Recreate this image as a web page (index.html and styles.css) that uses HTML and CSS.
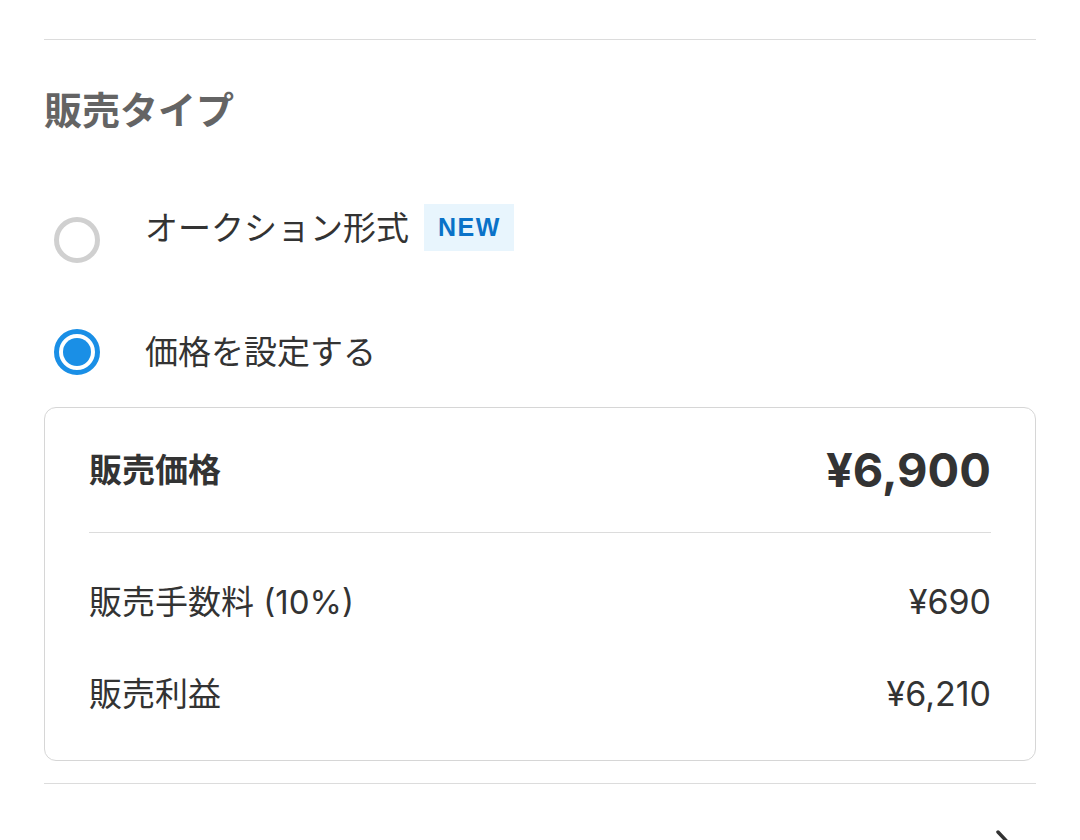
FILE: index.html
```html
<!DOCTYPE html>
<html lang="ja">
<head>
<meta charset="utf-8">
<title>販売タイプ</title>
<link rel="stylesheet" href="styles.css">
</head>
<body>
<div class="page">
  <div class="rule rule--top"></div>
  <h2 class="section-title">販売タイプ</h2>

  <div class="option option--auction">
    <span class="radio radio--offset"></span>
    <span class="option-body">
      <span class="option-label">オークション形式</span>
      <span class="badge">NEW</span>
    </span>
  </div>

  <div class="option option--fixed">
    <span class="radio radio--checked"><span class="radio-dot"></span></span>
    <span class="option-body">
      <span class="option-label">価格を設定する</span>
    </span>
  </div>

  <div class="price-card">
    <div class="price-head">
      <span class="price-head-label">販売価格</span>
      <span class="price-head-value">¥6,900</span>
    </div>
    <div class="price-divider"></div>
    <div class="price-rows">
      <div class="price-row">
        <span class="price-row-label">販売手数料 (10%)</span>
        <span class="price-row-value">¥690</span>
      </div>
      <div class="price-row">
        <span class="price-row-label">販売利益</span>
        <span class="price-row-value">¥6,210</span>
      </div>
    </div>
  </div>

  <div class="rule rule--bottom"></div>

  <div class="next-row">
    <svg class="chevron" width="22" height="36" viewBox="0 0 22 36" aria-hidden="true">
      <path d="M3 2 L18 18 L3 34" fill="none" stroke="#333333" stroke-width="3.5" stroke-linecap="round" stroke-linejoin="round"/>
    </svg>
  </div>
</div>
</body>
</html>
```

FILE: styles.css
```css
html, body {
  margin: 0;
  padding: 0;
  background: #ffffff;
}

body {
  font-family: "Inter", "Noto Sans CJK JP", sans-serif;
  color: #333333;
  width: 1080px;
  height: 840px;
  overflow: hidden;
}

.page {
  padding: 0 44px;
}

.rule {
  height: 1px;
  background: #dcdcdc;
}

.rule--top {
  margin-top: 39px;
}

.section-title {
  margin: 51px 0 0 0;
  font-size: 38px;
  line-height: 38px;
  font-weight: 700;
  color: #646464;
}

.option {
  display: flex;
  align-items: flex-start;
  gap: 45px;
  padding-left: 10px;
}

.option--auction {
  margin-top: 75px;
}

.option--fixed {
  margin-top: 66px;
  align-items: center;
}

.radio {
  flex: none;
  width: 46px;
  height: 46px;
  box-sizing: border-box;
  border-radius: 50%;
  border: 5px solid #d0d0d0;
  display: flex;
  align-items: center;
  justify-content: center;
}

.radio--offset {
  margin-top: 13px;
}

.radio--checked {
  border-color: #1a8fe6;
}

.radio-dot {
  width: 28px;
  height: 28px;
  border-radius: 50%;
  background: #1a8fe6;
}

.option-body {
  display: flex;
  align-items: center;
  gap: 15px;
  min-height: 46px;
}

.option-label {
  font-size: 33px;
  line-height: 46px;
  color: #333333;
}

.badge {
  display: inline-flex;
  align-items: center;
  height: 47px;
  padding: 0 13px 0 14px;
  background: #e8f5fd;
  color: #0a72c8;
  font-family: "Liberation Sans", "Noto Sans", sans-serif;
  font-size: 25px;
  font-weight: 700;
  letter-spacing: 1.5px;
}

.price-card {
  margin-top: 32px;
  border: 1.5px solid #d6d6d6;
  border-radius: 12px;
  padding: 0 44px;
}

.price-head {
  display: flex;
  justify-content: space-between;
  align-items: center;
  padding: 38px 0;
  height: 48px;
}

.price-head-label {
  font-size: 33px;
  font-weight: 700;
  line-height: 48px;
  color: #333333;
}

.price-head-value {
  font-size: 47px;
  font-weight: 700;
  line-height: 48px;
  color: #333333;
}

.price-divider {
  height: 1px;
  background: #dcdcdc;
}

.price-rows {
  display: flex;
  flex-direction: column;
  gap: 48px;
  padding: 47px 0 44px 0;
}

.price-row {
  display: flex;
  justify-content: space-between;
  align-items: center;
  height: 44px;
}

.price-row-label {
  font-size: 33px;
  line-height: 44px;
}

.price-row-value {
  font-size: 34px;
  line-height: 44px;
}

.rule--bottom {
  margin-top: 22px;
}

.next-row {
  display: flex;
  justify-content: flex-end;
  padding-right: 19px;
  margin-top: 46px;
}

.chevron {
  display: block;
}
```
